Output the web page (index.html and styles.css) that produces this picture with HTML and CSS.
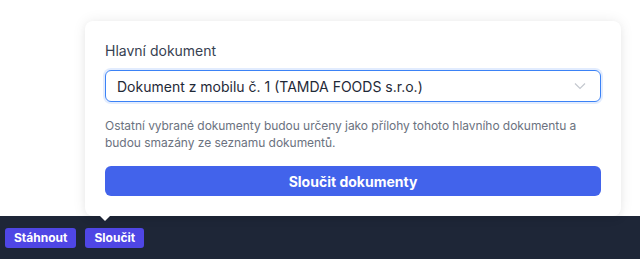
FILE: index.html
```html
<!DOCTYPE html>
<html lang="cs">
<head>
<meta charset="utf-8">
<link rel="stylesheet" href="styles.css">
</head>
<body>
<div class="stage">
  <div class="popover">
    <label class="label">Hlavní dokument</label>
    <div class="select">
      <span class="select-text">Dokument z mobilu č. 1 (TAMDA FOODS s.r.o.)</span>
      <svg class="chev" width="12" height="8" viewBox="0 0 12 8"><path d="M1 1.5 L6 6.5 L11 1.5" fill="none" stroke="#c4c8cf" stroke-width="1.2"/></svg>
    </div>
    <p class="help">Ostatní vybrané dokumenty budou určeny jako přílohy tohoto hlavního dokumentu a budou smazány ze seznamu dokumentů.</p>
    <button class="primary">Sloučit dokumenty</button>
    <span class="arrow"></span>
  </div>
</div>
<div class="toolbar">
  <button class="tbtn">Stáhnout</button>
  <button class="tbtn">Sloučit</button>
</div>
</body>
</html>
```
FILE: styles.css
```css
* { box-sizing: border-box; }
html, body { margin: 0; padding: 0; background: #ffffff; }
body { font-family: Inter, "Noto Sans", sans-serif; width: 640px; height: 268px; overflow: hidden; }
.stage { position: relative; height: 216px; }
.popover {
  position: absolute; left: 85px; top: 21px; width: 536px; height: 195px;
  background: #fff; border-radius: 8px;
  box-shadow: 0 0 14px rgba(0,0,0,0.08), 0 2px 6px rgba(0,0,0,0.04);
  padding: 20px 20px 20px 20px;
  display: flex; flex-direction: column;
  z-index: 2;
}
.label { font-size: 14px; line-height: 20px; color: #374151; font-weight: 400; }
.select {
  margin-top: 9px; height: 32px; border: 1px solid #3b82f6; border-radius: 6px;
  box-shadow: 0 0 0 2px rgba(59,130,246,0.15);
  display: flex; align-items: center; justify-content: space-between;
  padding: 0 14px 0 11px;
}
.select-text { font-size: 14px; color: #1f2937; }
.help { margin: 15px 0 0; font-size: 12px; line-height: 17px; color: #6b7280; letter-spacing: -0.05px; }
.primary {
  margin-top: 15px; height: 30px; border: 0; border-radius: 6px;
  background: #4263eb; color: #fff; font-family: inherit; font-size: 14px; font-weight: 700;
}
.arrow {
  position: absolute; left: 14px; bottom: -5px; width: 0; height: 0;
  border-left: 6px solid transparent; border-right: 6px solid transparent; border-top: 6px solid #fff;
}
.toolbar {
  height: 43px; background: #1e2637; display: flex; align-items: center; gap: 9px; padding: 0 5px;
}
.tbtn {
  height: 20px; border: 0; border-radius: 3px; background: #4f46e5; color: #fff;
  font-family: inherit; font-size: 12px; font-weight: 700; padding: 0 9px;
}
```
